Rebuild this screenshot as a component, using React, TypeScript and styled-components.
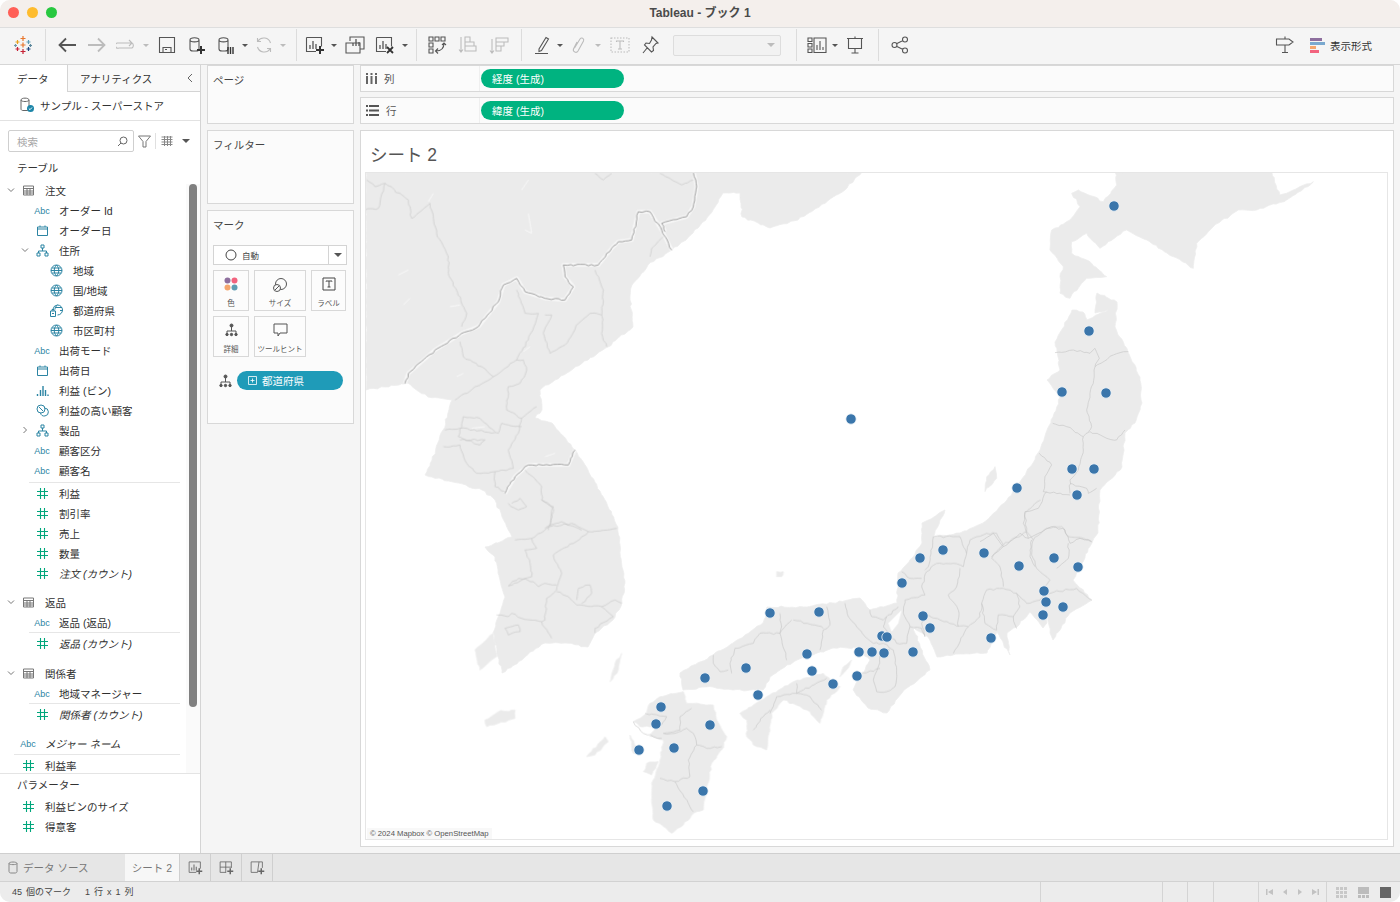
import React from "react";
import styled, { createGlobalStyle } from "styled-components";

const GlobalStyle = createGlobalStyle`
  html, body { margin: 0; padding: 0; background: #fff; }
  body { font-family: "Liberation Sans", "Noto Sans CJK JP", sans-serif; color: #333; }
  * { box-sizing: border-box; }
`;

// ---- Window frame ----
const Window = styled.div`
  width: 1400px;
  height: 902px;
  display: flex;
  flex-direction: column;
  overflow: hidden;
  border-radius: 10px;
  background: #f5f5f5;
`;

const TitleBar = styled.div`
  height: 28px;
  flex: none;
  position: relative;
  display: flex;
  align-items: center;
  justify-content: center;
  padding-bottom: 4px;
  background: #f4efec;
  border-bottom: 1px solid #dedede;
  font-size: 12px;
  font-weight: 700;
  color: #4a4a4a;
`;

const Lights = styled.div`
  position: absolute;
  left: 8px;
  top: 7px;
  display: flex;
  gap: 8px;
`;

const Light = styled.span<{ $c: string }>`
  width: 11px;
  height: 11px;
  border-radius: 50%;
  background: ${(p) => p.$c};
`;

// ---- Toolbar ----
const Toolbar = styled.div`
  height: 37px;
  flex: none;
  display: flex;
  align-items: center;
  padding-bottom: 2px;
  background: #f5f5f5;
  border-bottom: 1px solid #d6d6d6;
`;

const ToolGroup = styled.div`
  height: 32px;
  display: flex;
  align-items: center;
  padding: 0 7px 0 6px;
  border-left: 1px solid #dcdcdc;
`;

const LogoSlot = styled.div`
  width: 45px;
  display: flex;
  justify-content: center;
`;

const Tool = styled.div<{ $w: number; $off?: boolean }>`
  width: ${(p) => p.$w}px;
  flex: none;
  display: flex;
  justify-content: center;
  align-items: center;
  color: ${(p) => (p.$off ? "#bcbcbc" : "#555")};
`;

const Caret = styled.span<{ $off?: boolean; $size?: number }>`
  width: 0;
  height: 0;
  border-left: ${(p) => p.$size ?? 3}px solid transparent;
  border-right: ${(p) => p.$size ?? 3}px solid transparent;
  border-top: ${(p) => p.$size ?? 3}px solid ${(p) => (p.$off ? "#bcbcbc" : "#555")};
`;

const ToolSelect = styled.div`
  width: 108px;
  height: 21px;
  margin: 0 8px 0 11px;
  padding-right: 5px;
  display: flex;
  align-items: center;
  justify-content: flex-end;
  background: #f2f2f2;
  border: 1px solid #dddddd;
  border-radius: 2px;
`;

const ToolRight = styled.div`
  margin-left: auto;
  padding-right: 28px;
  display: flex;
  align-items: center;
  font-size: 10.5px;
  color: #333;
`;

const ShowMe = styled.div`
  display: flex;
  align-items: center;
  gap: 5px;
  margin-left: 14px;
`;

// ---- Work area ----
const Body = styled.div`
  flex: 1;
  min-height: 0;
  display: flex;
`;

const DataPane = styled.aside`
  width: 201px;
  flex: none;
  display: flex;
  flex-direction: column;
  position: relative;
  background: #fff;
  border-right: 1px solid #d4d4d4;
`;

const PaneTabs = styled.div`
  height: 27px;
  flex: none;
  display: flex;
  font-size: 10.5px;
`;

const PaneTab = styled.div<{ $active?: boolean; $w: number }>`
  width: ${(p) => p.$w}px;
  display: flex;
  align-items: center;
  padding-left: ${(p) => (p.$active ? 17 : 12)}px;
  position: relative;
  background: ${(p) => (p.$active ? "#fff" : "#f9f9f9")};
  ${(p) => (p.$active ? "" : "border-left: 1px solid #d4d4d4; border-bottom: 1px solid #d4d4d4;")}
`;

const CollapseMark = styled.span`
  position: absolute;
  right: 6px;
  top: 7px;
  color: #666;
  display: flex;
`;

const SourceRow = styled.div`
  height: 29px;
  flex: none;
  display: flex;
  align-items: center;
  gap: 5px;
  padding: 0 0 2px 19px;
  font-size: 10.5px;
  border-bottom: 1px solid #e2e2e2;
`;

const SearchRow = styled.div`
  display: flex;
  align-items: center;
  flex: none;
  height: 22px;
  margin: 9px 0 5px 8px;
`;

const SearchBox = styled.div`
  width: 126px;
  height: 22px;
  display: flex;
  align-items: center;
  justify-content: space-between;
  padding: 0 5px 0 8px;
  border: 1px solid #cfcfcf;
  border-radius: 2px;
  font-size: 10.5px;
  color: #a8a8a8;
  background: #fff;
`;

const SearchTools = styled.div`
  display: flex;
  align-items: center;
  color: #777;
  margin-left: 3px;
`;

const VRule = styled.span`
  width: 1px;
  height: 16px;
  margin: 0 5px 0 3px;
  background: #e0e0e0;
`;

const SectionHead = styled.div`
  height: 20px;
  flex: none;
  display: flex;
  align-items: center;
  padding-left: 17px;
  font-size: 10.5px;
  color: #333;
`;

const Tree = styled.div`
  flex: 1;
  min-height: 0;
  overflow: hidden;
  margin-top: 3px;
  border-bottom: 1px solid #e4e4e4;
`;

const ScrollTrack = styled.div`
  position: absolute;
  top: 119px;
  right: 0;
  bottom: 80px;
  width: 14px;
  background: #fafafa;
`;

const ScrollThumb = styled.div`
  position: absolute;
  top: 0;
  left: 3px;
  width: 8px;
  height: 523px;
  border-radius: 4px;
  background: #808080;
`;

const FieldRow = styled.div<{ $depth: number; $gap?: number }>`
  height: 20px;
  display: flex;
  align-items: center;
  padding-left: ${(p) => 4 + p.$depth * 14}px;
  margin-top: ${(p) => p.$gap ?? 0}px;
  font-size: 10.5px;
  white-space: nowrap;
  color: #2f2f2f;
`;

const Chevron = styled.span`
  width: 14px;
  flex: none;
  display: flex;
  justify-content: center;
  color: #777;
`;

const KindSlot = styled.span`
  width: 20px;
  flex: none;
  display: flex;
  justify-content: center;
  align-items: center;
  margin-right: 7px;
`;

const AbcMark = styled.span`
  padding-top: 2px;
  font-size: 9px;
  color: #2b84a3;
`;

const FieldName = styled.span<{ $italic?: boolean }>`
  font-style: ${(p) => (p.$italic ? "italic" : "normal")};
`;

const FieldRule = styled.div<{ $left: number; $gapTop?: number }>`
  height: 1px;
  width: ${(p) => 180 - p.$left}px;
  margin-left: ${(p) => p.$left}px;
  margin-top: ${(p) => p.$gapTop ?? 0}px;
  background: #e6e6e6;
`;

const ParamList = styled.div`
  height: 79px;
  flex: none;
`;

const ParamRow = styled.div`
  height: 20px;
  display: flex;
  align-items: center;
  padding-left: 18px;
  font-size: 10.5px;
  color: #2f2f2f;
`;

const ParamHead = styled(SectionHead)`
  margin-bottom: 2px;
`;

// ---- Cards column ----
const CardColumn = styled.div`
  width: 147px;
  flex: none;
  margin-left: 6px;
  display: flex;
  flex-direction: column;
  gap: 6px;
`;

const Card = styled.section<{ $h: number }>`
  height: ${(p) => p.$h}px;
  padding: 6px 6px 6px 5px;
  background: #fbfbfb;
  border: 1px solid #d8d8d8;
  font-size: 10.5px;
  color: #444;
`;

const MarkType = styled.div`
  height: 20px;
  margin: 13px 0 5px;
  display: flex;
  align-items: center;
  background: #fff;
  border: 1px solid #d4d4d4;
  font-size: 8.5px;
`;

const MarkTypeLabel = styled.div`
  flex: 1;
  height: 100%;
  display: flex;
  align-items: center;
  gap: 5px;
  padding-left: 11px;
  border-right: 1px solid #d4d4d4;
`;

const MarkTypeArrow = styled.div`
  width: 17px;
  display: flex;
  justify-content: center;
`;

const MarkGrid = styled.div`
  display: grid;
  grid-template-columns: 36px 52px 35px;
  grid-auto-rows: 41px;
  gap: 5px;
`;

const MarkButton = styled.div`
  display: flex;
  flex-direction: column;
  align-items: center;
  justify-content: space-between;
  padding: 6px 0 2px;
  background: #fcfcfc;
  border: 1px solid #d8d8d8;
  font-size: 7.5px;
  color: #555;
  white-space: nowrap;
`;

const MarkField = styled.div`
  display: flex;
  align-items: center;
  margin-top: 14px;
  color: #555;
`;

const MarkFieldIcon = styled.span`
  width: 24px;
  display: flex;
  justify-content: center;
`;

const FieldPill = styled.div`
  width: 106px;
  height: 19px;
  display: flex;
  align-items: center;
  gap: 5px;
  padding: 0 0 1px 11px;
  border-radius: 10px;
  background: #1f9bb8;
  color: #fff;
  font-size: 10.5px;
`;

// ---- Shelves and view ----
const ViewColumn = styled.div`
  flex: 1;
  min-width: 0;
  margin: 0 6px 6px 6px;
  display: flex;
  flex-direction: column;
`;

const Shelf = styled.div<{ $h: number; $mb: number }>`
  height: ${(p) => p.$h}px;
  margin-bottom: ${(p) => p.$mb}px;
  flex: none;
  display: flex;
  align-items: center;
  background: #fbfbfb;
  border: 1px solid #d8d8d8;
`;

const ShelfLabel = styled.div`
  width: 119px;
  flex: none;
  height: 100%;
  display: flex;
  align-items: center;
  gap: 7px;
  padding-left: 5px;
  font-size: 10.5px;
  color: #555;
  border-right: 1px solid #efefef;
`;

const MeasurePill = styled.div`
  width: 143px;
  height: 19px;
  margin-left: 1px;
  display: flex;
  align-items: center;
  padding: 0 0 1px 11px;
  border-radius: 10px;
  background: #00b380;
  color: #fff;
  font-size: 10.5px;
`;

const Sheet = styled.div`
  flex: 1;
  min-height: 0;
  display: flex;
  flex-direction: column;
  padding: 0 5px 6px 4px;
  background: #fff;
  border: 1px solid #d8d8d8;
`;

const SheetTitle = styled.h1`
  height: 41px;
  margin: 0;
  padding: 12px 0 0 5px;
  font-size: 17.5px;
  line-height: 24px;
  font-weight: 400;
  color: #555;
`;

const MapFrame = styled.div`
  flex: 1;
  min-height: 0;
  position: relative;
  border: 1px solid #e6e6e6;
  background: #fff;
  overflow: hidden;
`;

const MapSvg = styled.svg`
  display: block;
  width: 100%;
  height: 100%;
`;

const LandLayer = styled.g`
  filter: blur(0.6px);
`;

const Land = styled.polygon`
  fill: #ebebeb;
  stroke: #eeeeee;
  stroke-width: 0.8;
  vector-effect: non-scaling-stroke;
`;

const Water = styled.polygon`
  fill: #fff;
`;

const Region = styled.polyline`
  fill: none;
  stroke: #c0c0c0;
  stroke-width: 0.55;
  stroke-linejoin: round;
  vector-effect: non-scaling-stroke;
`;

const Frontier = styled.polyline`
  fill: none;
  stroke: #959595;
  stroke-width: 0.9;
  stroke-linejoin: round;
  vector-effect: non-scaling-stroke;
`;

const FrontierGlow = styled.polyline`
  fill: none;
  stroke: #f7f7f7;
  stroke-width: 4;
  stroke-linejoin: round;
  vector-effect: non-scaling-stroke;
`;

const Streak = styled.polyline`
  fill: none;
  stroke: #f8f8f8;
  stroke-width: 1;
  vector-effect: non-scaling-stroke;
`;

const Mark = styled.circle`
  fill: #3b76ab;
  stroke: #f4f7fa;
  stroke-width: 0.8;
`;

const Attribution = styled.div`
  position: absolute;
  left: 1px;
  bottom: 0;
  padding: 1px 3px;
  font-size: 7.7px;
  color: #555;
  background: rgba(245, 245, 245, 0.7);
`;

// ---- Bottom bars ----
const TabBar = styled.div`
  height: 29px;
  flex: none;
  display: flex;
  align-items: stretch;
  background: #e6e6e6;
  border-top: 1px solid #cfcfcf;
  border-bottom: 1px solid #d2d2d2;
  font-size: 10.5px;
  color: #777;
`;

const SourceTab = styled.div`
  width: 125px;
  display: flex;
  align-items: center;
  gap: 5px;
  padding-left: 8px;
`;

const SheetTab = styled.div`
  width: 55px;
  display: flex;
  align-items: center;
  justify-content: center;
  background: #f7f7f7;
  border-right: 1px solid #cfcfcf;
`;

const NewTab = styled.div`
  width: 31px;
  display: flex;
  align-items: center;
  justify-content: center;
  color: #666;
  border-right: 1px solid #cfcfcf;
`;

const StatusBar = styled.div`
  height: 20px;
  flex: none;
  display: flex;
  align-items: stretch;
  background: #ececec;
  font-size: 9px;
  word-spacing: 1.5px;
  color: #444;
`;

const StatusText = styled.div<{ $w: number; $pad: number }>`
  width: ${(p) => p.$w}px;
  padding: 0 0 2px ${(p) => p.$pad}px;
  display: flex;
  align-items: center;
  white-space: nowrap;
`;

const StatusCell = styled.div<{ $w: number }>`
  width: ${(p) => p.$w}px;
  border-left: 1px solid #d4d4d4;
`;

const StatusTools = styled.div<{ $w: number }>`
  width: ${(p) => p.$w}px;
  display: flex;
  align-items: center;
  justify-content: space-around;
  border-left: 1px solid #d4d4d4;
  padding: 0 3px;
`;

// ---- Icons ----
type GlyphProps = { size?: number; vb?: number; children: React.ReactNode };

const Glyph = ({ size = 20, vb = 20, children }: GlyphProps) => (
  <svg width={size} height={size} viewBox={`0 0 ${vb} ${vb}`} fill="none" stroke="currentColor" strokeWidth={1.1}>
    {children}
  </svg>
);

const Cylinder = () => (
  <path d="M4 5c0-3 9-3 9 0v9c0 1.500-2 2-3 2H7c-1.500 0-3-.5-3-2zM4 5c0 2.500 9 2.500 9 0" />
);

const Bars = ({ x = 0, y = 0 }: { x?: number; y?: number }) => (
  <path transform={`translate(${x} ${y})`} d="M6 13V9M9 13V5M12 13V8" strokeWidth={1.3} />
);

const Plus = () => <path d="M15 11v8M11 15h8" stroke="#333" strokeWidth={2} />;

const icons: Record<string, React.ReactNode> = {
  back: <path d="M19 10H2.500M9 3.500 2.500 10 9 16.500" strokeWidth={1.8} />,
  forward: <path d="M1 10h16.500M11 3.500l6.500 6.500-6.500 6.500" strokeWidth={1.8} />,
  redo: <path d="M1 8h15v0a3 3 0 0 1 0 5H3a2.500 2.500 0 0 1-2-5M13 5l3 3-3 3" />,
  save: <path d="M2.500 2.500h15v15h-15zM6 17.500v-5h8v5M8 14.500h2" />,
  addData: (
    <>
      <Cylinder />
      <Plus />
    </>
  ),
  pauseData: (
    <>
      <Cylinder />
      <path d="M13 12v7M15.500 12v7M18 12v7" stroke="#333" strokeWidth={1.4} />
    </>
  ),
  refresh: <path d="M16.500 8a7 7 0 0 0-12.500-2M3.500 12a7 7 0 0 0 12.500 2M3.500 3v3.500H7M16.500 17v-3.500H13" />,
  newSheet: (
    <>
      <path d="M1.500 2.500h15v9M11 16.500H1.500v-14" />
      <Bars x={-1} y={1} />
      <Plus />
    </>
  ),
  dupSheet: (
    <>
      <path d="M5 6V2h14v12h-4M1 8h14v10H1z" />
      <path d="M8 11V8M11 11V4M14 11V7" strokeWidth={1.3} />
    </>
  ),
  clearSheet: (
    <>
      <path d="M1.500 2.500h15v9M11 16.500H1.500v-14" />
      <Bars x={-1} y={1} />
      <path d="m12 12 6 6M18 12l-6 6" stroke="#333" strokeWidth={1.8} />
    </>
  ),
  swap: (
    <path d="M2 2h4v4H2zM8 2h4v4H8zM14 2h4v4h-4zM2 8h4v4H2zM2 14h4v4H2zM17 8c0 5-3 8-8 8M11 13.500 8.500 16l2.500 2.500M15 10l2-2 2 2" />
  ),
  sortAsc: <path d="M4 2v15M2 14.500 4 17l2-2.500M8 2h5v5H8zM8 7h9v4H8zM8 11h11v5H8z" />,
  sortDesc: <path d="M3 4v14M1 15.500 3 18l2-2.500M7 3h12v4H7zM7 7h8v4H7zM7 11h5v5H7z" />,
  pen: <path d="M7 14 14 2.500l2.500 1.500-7 11.500-2.500 1zM3 18.500h13" />,
  clip: <path d="m8 7-3.500 7c-1 3 3 4.500 4.500 2l5.500-10c1-2.500-2-4-3.500-2L5.500 13" />,
  textBox: (
    <>
      <path d="M1 3h18v14H1z" strokeDasharray="1.500 1.500" />
      <path d="M6.500 7V6h7v1M10 6v8M8 14h4" />
    </>
  ),
  pin: <path d="m12 2 6 6-2 .5-3 3.500.5 3.500-2 1.500-7-7 1.500-2 3.500.5L11.500 5zM7.500 12.500 3 18" />,
  showSheet: (
    <>
      <path d="M1 3h4v3.500H1zM1 8.500h4V12H1zM1 14h4v3.500H1zM7 3h12v14.500H7z" />
      <path d="M10 15v-5M13 15V6M16 15v-3" />
    </>
  ),
  present: <path d="M2 3.500h16M3.500 3.500v10h13v-10M10 13.500v4M6.500 18h7M10 1.500v2" />,
  share: (
    <path d="M7 10a2.500 2.500 0 1 1-5 0 2.500 2.500 0 0 1 5 0zM17.500 4.500a2.500 2.500 0 1 1-5 0 2.500 2.500 0 0 1 5 0zM17.500 15.500a2.500 2.500 0 1 1-5 0 2.500 2.500 0 0 1 5 0zM6.500 8.800l6.500-3.200M6.500 11.200l6.500 3.200" />
  ),
  signpost: <path d="M1.500 4h12.500l4 3-4 3H1.500zM10 1.500V4M10 10v7M7 17.500h6" />,
};

const ToolIcon = ({ name }: { name: string }) => <Glyph>{icons[name]}</Glyph>;

const TableauLogo = () => (
  <svg width="20" height="20" viewBox="0 0 20 20" fill="none" strokeWidth={1.2}>
    <path d="M10 1v5M7.500 3.500h5" stroke="#e8762c" />
    <path d="M4.500 5v4M2.500 7h4" stroke="#eaa21b" />
    <path d="M15.500 5v4M13.500 7h4" stroke="#5b9bb5" />
    <path d="M1 10.500h3M2.500 9v3" stroke="#7099a6" />
    <path d="M19 10.500h-3M17.500 9v3" stroke="#5b879b" />
    <path d="M10 7.500v5M7.500 10h5" stroke="#e8762c" />
    <path d="M4.500 12v4M2.500 14h4" stroke="#c72035" />
    <path d="M15.500 12v4M13.500 14h4" stroke="#1f457e" />
    <path d="M10 14v5M7.500 16.500h5" stroke="#c72035" />
  </svg>
);

const ShowMeIcon = () => (
  <svg width="16" height="16" viewBox="0 0 16 16">
    <rect x="1" y="1" width="12" height="3" fill="#8e6f9e" />
    <rect x="1" y="5" width="15" height="3" fill="#7aa9cf" />
    <rect x="1" y="9" width="6" height="3" fill="#f5a66d" />
    <rect x="1" y="13" width="9" height="3" fill="#f2637e" />
  </svg>
);

const SourceIcon = () => (
  <svg width="16" height="16" viewBox="0 0 16 16" fill="none" stroke="#666">
    <path d="M2 3c0-2.500 8-2.500 8 0v9c0 1-1 1.500-2 1.500H4c-1 0-2-.5-2-1.500zM2 3c0 2 8 2 8 0" />
    <circle cx="11.500" cy="11.500" r="3.500" fill="#1c85a8" stroke="none" />
    <path d="m9.800 11.500 1.200 1.200 2-2.200" stroke="#fff" />
  </svg>
);

const TypeIcon = ({ kind }: { kind: string }) => {
  const blue = "#2b84a3";
  const green = "#00a67c";
  const svg = (stroke: string, body: React.ReactNode) => (
    <svg width="13" height="13" viewBox="0 0 13 13" fill="none" stroke={stroke}>
      {body}
    </svg>
  );
  switch (kind) {
    case "abc":
      return <AbcMark>Abc</AbcMark>;
    case "date":
      return svg(blue, <path d="M1.500 3h10v8.500h-10zM1.500 5h10M4 1.500V3M9 1.500V3" />);
    case "hier":
      return svg(blue, <path d="M5 1h3v3H5zM1 9h3v3H1zM9 9h3v3H9zM6.500 4v3M2.500 9V7h8v2" />);
    case "globe":
      return svg(blue, <path d="M6.500 1a5.500 5.500 0 1 0 0 11 5.500 5.500 0 0 0 0-11zM1 6.500h11M2 4h9M2 9h9M6.500 1c-3 3-3 8 0 11M6.500 1c3 3 3 8 0 11" />);
    case "geo":
      return svg(blue, <path d="M7.500 1a5 5 0 0 1 0 10M3 5a5 5 0 0 1 4.500-4M5 5.500c0-2 1-3.500 2.500-4.500M10 6.500h2.500M6 3.500h6M.5 7h5v5.500h-5zM2 7V5.500h2V7M2 9.500h2" />);
    case "bin":
      return svg(blue, <path d="M1.500 12v-2M4.500 12V6M7 12V2M9.500 12V6M12 12v-1.500" strokeWidth={1.4} />);
    case "set":
      return svg(blue, <path d="M5 1a4 4 0 1 0 0 8 4 4 0 0 0 0-8zM8.500 4a4 4 0 1 1-4 5M3 3l4 4" />);
    case "table":
      return svg("#777", <path d="M1.500 2h10v9h-10zM1.500 4.500h10M1.500 7h10M1.500 9h10M5 4.500V11M8 4.500V11" />);
    default:
      return svg(green, <path d="M4.500 1v11M8.500 1v11M1 4.500h11M1 8.500h11" strokeWidth={1.1} />);
  }
};

const Chev = ({ open }: { open: boolean }) => (
  <svg width="8" height="8" viewBox="0 0 8 8" fill="none" stroke="currentColor">
    <path d={open ? "M1 2.500 4 5.500l3-3" : "M2.500 1l3 3-3 3"} />
  </svg>
);

const DetailIcon = () => (
  <svg width="13" height="14" viewBox="0 0 13 14" fill="none" stroke="#555">
    <circle cx="6.500" cy="2.500" r="1.500" fill="#555" />
    <path d="M6.500 4v4M2 10V8h9v2" />
    <circle cx="2" cy="11.500" r="1.200" fill="#555" />
    <circle cx="6.500" cy="11.500" r="1.200" fill="#555" />
    <circle cx="11" cy="11.500" r="1.200" fill="#555" />
  </svg>
);

const NavIcon = ({ d }: { d: string }) => (
  <svg width="8" height="8" viewBox="0 0 8 8" fill="#c2c2c2">
    <path d={d} />
  </svg>
);

// ---- Data ----
type Field = {
  label: string;
  kind: string;
  depth: number;
  chevron?: "open" | "closed";
  italic?: boolean;
  gap?: number;
  ruleAfter?: { left: number; gapTop?: number };
};

const fields: Field[] = [
  { label: "注文", kind: "table", depth: 0, chevron: "open" },
  { label: "オーダー Id", kind: "abc", depth: 1 },
  { label: "オーダー日", kind: "date", depth: 1 },
  { label: "住所", kind: "hier", depth: 1, chevron: "open" },
  { label: "地域", kind: "globe", depth: 2 },
  { label: "国/地域", kind: "globe", depth: 2 },
  { label: "都道府県", kind: "geo", depth: 2 },
  { label: "市区町村", kind: "globe", depth: 2 },
  { label: "出荷モード", kind: "abc", depth: 1 },
  { label: "出荷日", kind: "date", depth: 1 },
  { label: "利益 (ビン)", kind: "bin", depth: 1 },
  { label: "利益の高い顧客", kind: "set", depth: 1 },
  { label: "製品", kind: "hier", depth: 1, chevron: "closed" },
  { label: "顧客区分", kind: "abc", depth: 1 },
  { label: "顧客名", kind: "abc", depth: 1, ruleAfter: { left: 29, gapTop: 2 } },
  { label: "利益", kind: "num", depth: 1 },
  { label: "割引率", kind: "num", depth: 1 },
  { label: "売上", kind: "num", depth: 1 },
  { label: "数量", kind: "num", depth: 1 },
  { label: "注文 (カウント)", kind: "num", depth: 1, italic: true },
  { label: "返品", kind: "table", depth: 0, chevron: "open", gap: 9 },
  { label: "返品 (返品)", kind: "abc", depth: 1, ruleAfter: { left: 29 } },
  { label: "返品 (カウント)", kind: "num", depth: 1, italic: true },
  { label: "関係者", kind: "table", depth: 0, chevron: "open", gap: 10 },
  { label: "地域マネージャー", kind: "abc", depth: 1, ruleAfter: { left: 29 } },
  { label: "関係者 (カウント)", kind: "num", depth: 1, italic: true },
  { label: "メジャー ネーム", kind: "abc", depth: 0, italic: true, gap: 9, ruleAfter: { left: 14, gapTop: 1 } },
  { label: "利益率", kind: "num", depth: 0 },
];

const marks: [number, number][] = [
  [1114, 206], [1089, 331], [1062, 392], [1106, 393], [1072, 469], [1094, 469], [1017, 488], [1077, 495],
  [920, 558], [943, 550], [984, 553], [1019, 566], [1054, 558], [1078, 567], [902, 583], [1044, 591],
  [1046, 602], [1063, 607], [1043, 615], [923, 616], [930, 628], [991, 638], [882, 636], [887, 637],
  [859, 652], [872, 652], [884, 653], [913, 652], [807, 654], [812, 671], [833, 684], [857, 676],
  [770, 613], [819, 612], [746, 668], [705, 678], [758, 695], [661, 707], [656, 724], [710, 725],
  [639, 750], [674, 748], [703, 791], [667, 806], [851, 419],
];

// breaks a straight traced segment into small uneven steps, k = units per page pixel
const noise = (a: number, b: number) => {
  const v = Math.sin(a * 12.9898 + b * 78.233) * 43758.5453;
  return (v - Math.floor(v)) * 2 - 1;
};

const rough = (points: string, k = 1, closed = false) => {
  const pts = points.split(" ").map((s) => s.split(",").map(Number));
  if (closed) pts.push(pts[0]);
  const out: string[] = [];
  pts.slice(0, -1).forEach(([x1, y1], i) => {
    const [x2, y2] = pts[i + 1];
    const len = Math.hypot(x2 - x1, y2 - y1);
    const n = Math.max(1, Math.round(len / (3.5 * k)));
    for (let j = 0; j < n; j++) {
      const t = j / n;
      const amp = j === 0 ? 0 : 0.9 * k;
      const x = x1 + (x2 - x1) * t + noise(x1 + j, y1) * amp;
      const y = y1 + (y2 - y1) * t + noise(y1 + j, x1 + 7) * amp;
      out.push(`${x.toFixed(1)},${y.toFixed(1)}`);
    }
  });
  const last = pts[pts.length - 1];
  out.push(`${last[0]},${last[1]}`);
  return out.join(" ");
};

// land shapes, in page coordinates
const mainland =
  "366,172 862,172 845,190 798,220 770,228 742,217 740,193 723,193 712,212 693,233 672,250 648,265 632,285 630,297 633,327 608,347 588,360 555,380 540,390 542,410 535,418 552,423 575,450 588,470 605,500 618,527 622,567 625,583 622,603 613,620 595,633 588,647 565,643 545,643 525,657 502,673 498,657 493,633 505,597 498,573 495,557 485,547 512,537 502,517 495,500 482,490 425,475 432,460 443,430 452,400 428,397 408,383 385,387 366,390";
const honshu =
  "1097,293 1117,302 1115,327 1128,352 1140,377 1142,403 1135,423 1125,433 1122,467 1100,490 1098,533 1092,543 1078,570 1073,580 1092,600 1070,613 1053,640 1050,633 1048,617 1042,607 1047,623 1043,628 1030,612 1017,627 1007,633 1010,655 997,632 987,653 953,655 937,657 928,637 913,627 930,670 902,693 887,713 868,708 853,690 860,677 870,660 858,648 833,648 813,655 797,660 770,677 763,690 733,690 713,687 683,690 680,673 713,655 733,643 763,623 767,607 807,607 833,603 860,598 870,610 897,603 898,573 913,557 922,543 922,523 945,510 940,520 933,537 960,533 983,523 1007,500 1017,487 1038,453 1053,417 1060,397 1047,380 1060,370 1055,342 1072,310 1083,312 1087,320 1108,310 1095,313";

// shapes and lines traced per map crop
const frames = {
  nw: "translate(365 170) scale(.3333)",
  sw: "translate(365 500) scale(.3333)",
  mid: "translate(620 500) scale(.3333)",
  ne: "translate(980 170) scale(.3333)",
};

const midLand = [
  "360,640 440,590 520,545 610,520 660,560 620,600 600,670 560,630 490,600 455,640 440,750 400,735 380,710 380,660",
  "120,590 190,575 200,610 280,615 290,660 320,710 305,750 275,790 250,930 215,945 190,975 155,1000 125,975 100,960 95,850 115,800 130,720 90,710 110,680 60,680 40,665 80,640 90,610",
  "30,705 60,760 40,760",
  "80,790 115,785 95,825 70,815",
  "695,480 680,510 660,530 670,500",
  "470,215 490,215 485,230 470,230",
];

const neLand = [
  "405,5 875,5 900,75 940,60 1000,35 920,90 830,120 775,120 700,170 650,220 640,295 580,260 500,210 440,180 360,235 320,190 275,215 275,250 335,280 380,320 320,325 270,385 240,370 240,320 250,290 210,240 215,180 270,150 300,110 275,70 295,60 370,95 410,45",
  "45,890 50,925 15,965 20,920",
];

const swLand = [
  "360,660 400,635 450,630 450,655 400,670 365,680",
  "770,460 760,510 735,545 750,490",
  "665,770 720,710 730,725 690,765",
  "330,450 385,400 395,470 345,510",
];

const nwRegions = [
  "0,120 40,115 60,40 130,90 140,145 195,100 215,190 250,260 250,310 305,430 290,470",
  "5,30 30,50 60,40",
  "285,515 295,560 350,590 385,620 270,690",
  "385,620 455,570 475,570 485,600 465,640 430,650 425,720 470,745 515,710",
  "470,745 460,790 430,840 445,895",
  "455,360 480,430 520,430 490,510 455,570",
  "540,435 560,435 535,490 555,550 600,525 640,460 675,430 710,435",
  "690,300 715,360 710,490 725,530",
  "240,780 285,775 400,790 410,760 470,770",
  "295,740 345,745 390,785",
  "295,740 280,800 345,825 360,810 285,810",
  "235,830 285,825 305,880 335,910 390,905 445,895",
  "390,905 390,950 420,965",
  "430,1000 460,1020 485,1010 465,985 440,1000",
  "480,900 530,950 530,990 565,1010 550,1080",
  "540,1075 590,1055 650,1080",
  "690,10 715,30 740,10",
  "885,10 950,45 985,30",
  "855,260 860,235 895,200",
];

const nwFrontiers = [
  "120,640 130,610 210,540 290,490 340,470 400,395 415,345 455,325 480,365 540,385 600,390 625,350 600,320 595,285 700,285 740,235 760,215 800,210 820,125 855,125 890,180 920,240",
  "985,0 995,50 985,110 965,140 890,160 900,185",
  "630,840 610,885 490,885 450,920 420,970",
];

const swRegions = [
  "530,0 565,25 555,80 620,70 670,95 755,85",
  "555,80 500,115 450,120",
  "500,115 515,145 480,150 495,190 500,230 430,258",
  "430,258 460,235 505,245 520,260 540,250 575,255",
  "670,95 625,130 565,165 590,220 575,270 545,295 540,360 530,365 560,415",
  "575,275 610,290 635,315 710,320 750,300 770,310",
  "710,320 745,350 690,385 690,400",
  "395,345 430,350 440,340 470,355 530,365",
  "420,385 460,375 465,395 430,405 420,385",
  "635,300 640,265 675,255 680,280 650,310",
];

const midRegions = [
  "1262,0 1215,40 1220,95 1240,120 1280,85 1325,80 1345,110 1390,115 1415,125",
  "1240,120 1235,165 1250,205 1290,240 1275,260",
  "1220,95 1150,135 1115,175 1140,200 1150,260",
  "1150,135 1130,100 1100,100 1050,120 1040,160 1020,110 940,110 925,200 915,210",
  "1040,160 1030,200 1000,190 950,190 920,215 905,260 915,285 855,300",
  "1020,205 1010,260 985,285 1015,330 1015,380",
  "1150,265 1100,270 1085,310 1095,370 1130,390 1135,345 1180,350 1200,320 1190,280 1220,310 1260,300 1280,280 1370,265 1415,300",
  "1150,265 1190,280",
  "1085,310 1080,350 1045,380 1010,378 960,360 925,345 905,370 915,410",
  "1045,380 1000,460",
  "1180,350 1190,385",
  "845,215 870,235 905,235",
  "855,300 850,340 870,380 860,430 830,430 790,380 800,350",
  "675,310 685,350 710,380 735,410 760,430 790,430 820,450 830,510 825,560 800,575 770,575 760,540 775,500 780,465 810,450",
  "750,330 755,350 790,360 835,320",
  "870,380 905,385 915,410",
  "620,320 630,375 610,390 600,450",
  "520,360 585,375 610,385",
  "515,360 480,400 420,400 400,430 345,445 330,490 335,520",
  "480,340 485,380 480,400 500,480",
  "280,465 280,490 300,515 325,510",
  "700,530 780,505",
  "530,550 530,580 570,590 605,630",
  "450,640 470,590 530,580 620,535",
  "400,690 430,650 450,630",
  "75,640 140,650 125,675 100,660",
  "40,665 70,700 100,710 125,715",
  "215,625 180,650 180,690 130,700 165,700 200,685 220,700 230,735 205,780 210,830 165,845 120,835",
  "230,735 260,745 305,740",
  "165,845 205,910 220,935",
];

const neRegions = [
  "225,548 280,540 330,550 345,535 358,565 345,590 400,555 445,545",
  "345,590 340,640 330,670 320,720 335,770 325,785",
  "218,760 260,770 310,800 330,785 380,805 410,810 435,780",
  "310,800 310,840 295,900 270,930 270,970",
  "178,850 215,885 195,920 190,965 270,975",
  "270,940 320,955 325,970 350,955",
  "200,965 175,1015 135,1025 130,1060 145,1105",
  "145,1105 215,1070 255,1080 270,1120 300,1105 335,1115",
  "155,1110 150,1160 165,1190",
  "265,1120 265,1165 230,1195",
  "0,1115 40,1090 70,1130 120,1090 145,1105",
  "35,1160 70,1130",
];

const nwStreaks = [
  "190,95 205,70", "100,315 130,300", "115,405 135,385", "480,180 500,190 490,130", "470,60 490,30",
  "255,410 285,405", "475,545 495,530", "320,775 360,770", "540,860 570,850", "275,620 295,610",
];

const JapanMap = () => (
  <MapSvg viewBox="366 173 1021 666" aria-hidden="true">
    <LandLayer>
      <Land points={rough(mainland, 1, true)} />
      <Land points={rough(honshu, 1, true)} />
      <g transform={frames.mid}>
        {midLand.map((p) => <Land key={p} points={rough(p, 3, true)} />)}
        <Water points="805,370 845,330 835,370 815,395" />
      </g>
      <g transform={frames.ne}>
        {neLand.map((p) => <Land key={p} points={rough(p, 3, true)} />)}
      </g>
      <g transform={frames.sw}>
        {swLand.map((p) => <Land key={p} points={rough(p, 3, true)} />)}
      </g>
    </LandLayer>
    <g transform={frames.nw}>
      {nwStreaks.map((p) => <Streak key={p} points={p} />)}
      {nwFrontiers.map((p) => <FrontierGlow key={p} points={p} />)}
      {nwRegions.map((p) => <Region key={p} points={rough(p, 3)} />)}
      {nwFrontiers.map((p) => <Frontier key={p} points={rough(p, 3)} />)}
    </g>
    <g transform={frames.sw}>
      {swRegions.map((p) => <Region key={p} points={rough(p, 3)} />)}
    </g>
    <g transform={frames.mid}>
      {midRegions.map((p) => <Region key={p} points={rough(p, 3)} />)}
    </g>
    <g transform={frames.ne}>
      {neRegions.map((p) => <Region key={p} points={rough(p, 3)} />)}
    </g>
    {marks.map(([x, y]) => <Mark key={`${x}-${y}`} cx={x} cy={y} r={5.2} />)}
  </MapSvg>
);

const App: React.FC = () => {
  return (
    <Window>
      <GlobalStyle />
      <TitleBar>
        <Lights>
          <Light $c="#ff5f57" />
          <Light $c="#febc2e" />
          <Light $c="#28c840" />
        </Lights>
        Tableau - ブック 1
      </TitleBar>

      <Toolbar>
        <LogoSlot><TableauLogo /></LogoSlot>
        <ToolGroup>
          <Tool $w={30}><ToolIcon name="back" /></Tool>
          <Tool $w={30} $off><ToolIcon name="forward" /></Tool>
          <Tool $w={28} $off><ToolIcon name="redo" /></Tool>
          <Tool $w={12}><Caret $off /></Tool>
          <Tool $w={29}><ToolIcon name="save" /></Tool>
          <Tool $w={30}><ToolIcon name="addData" /></Tool>
          <Tool $w={28}><ToolIcon name="pauseData" /></Tool>
          <Tool $w={12}><Caret /></Tool>
          <Tool $w={26} $off><ToolIcon name="refresh" /></Tool>
          <Tool $w={12}><Caret $off /></Tool>
        </ToolGroup>
        <ToolGroup>
          <Tool $w={24}><ToolIcon name="newSheet" /></Tool>
          <Tool $w={14}><Caret /></Tool>
          <Tool $w={28}><ToolIcon name="dupSheet" /></Tool>
          <Tool $w={32}><ToolIcon name="clearSheet" /></Tool>
          <Tool $w={8}><Caret /></Tool>
        </ToolGroup>
        <ToolGroup>
          <Tool $w={28}><ToolIcon name="swap" /></Tool>
          <Tool $w={32} $off><ToolIcon name="sortAsc" /></Tool>
          <Tool $w={31} $off><ToolIcon name="sortDesc" /></Tool>
        </ToolGroup>
        <ToolGroup>
          <Tool $w={28}><ToolIcon name="pen" /></Tool>
          <Tool $w={8}><Caret /></Tool>
          <Tool $w={30} $off><ToolIcon name="clip" /></Tool>
          <Tool $w={8}><Caret $off /></Tool>
          <Tool $w={36} $off><ToolIcon name="textBox" /></Tool>
          <Tool $w={24}><ToolIcon name="pin" /></Tool>
          <ToolSelect><Caret $off $size={4} /></ToolSelect>
        </ToolGroup>
        <ToolGroup>
          <Tool $w={28}><ToolIcon name="showSheet" /></Tool>
          <Tool $w={8}><Caret /></Tool>
          <Tool $w={32}><ToolIcon name="present" /></Tool>
        </ToolGroup>
        <ToolGroup>
          <Tool $w={30}><ToolIcon name="share" /></Tool>
        </ToolGroup>
        <ToolRight>
          <Tool $w={20}><ToolIcon name="signpost" /></Tool>
          <ShowMe>
            <ShowMeIcon />
            表示形式
          </ShowMe>
        </ToolRight>
      </Toolbar>

      <Body>
        <DataPane>
          <PaneTabs>
            <PaneTab $active $w={67}>データ</PaneTab>
            <PaneTab $w={133}>
              アナリティクス
              <CollapseMark>
                <svg width="8" height="12" viewBox="0 0 8 12" fill="none" stroke="currentColor">
                  <path d="M6 2 2 6l4 4" />
                </svg>
              </CollapseMark>
            </PaneTab>
          </PaneTabs>
          <SourceRow>
            <SourceIcon />
            サンプル - スーパーストア
          </SourceRow>
          <SearchRow>
            <SearchBox>
              検索
              <svg width="11" height="11" viewBox="0 0 11 11" fill="none" stroke="#666">
                <circle cx="6.500" cy="4.500" r="3.500" />
                <path d="M4 7 1 10" />
              </svg>
            </SearchBox>
            <SearchTools>
              <svg width="15" height="15" viewBox="0 0 15 15" fill="none" stroke="currentColor">
                <path d="M1.500 2h12L9 7.500V13H6V7.500z" />
              </svg>
              <VRule />
              <svg width="12" height="10" viewBox="0 0 12 10" fill="none" stroke="#888">
                <path d="M.5 1h11M.5 3.500h11M.5 6h11M.5 8.500h11M3.500 0v10M6.500 0v10M9.500 0v10" />
              </svg>
              <Tool $w={25}><Caret $size={4} /></Tool>
            </SearchTools>
          </SearchRow>
          <SectionHead>テーブル</SectionHead>
          <Tree>
            {fields.map((f) => (
              <React.Fragment key={f.label}>
                <FieldRow $depth={f.depth} $gap={f.gap}>
                  <Chevron>{f.chevron ? <Chev open={f.chevron === "open"} /> : null}</Chevron>
                  <KindSlot><TypeIcon kind={f.kind} /></KindSlot>
                  <FieldName $italic={f.italic}>{f.label}</FieldName>
                </FieldRow>
                {f.ruleAfter ? <FieldRule $left={f.ruleAfter.left} $gapTop={f.ruleAfter.gapTop} /> : null}
              </React.Fragment>
            ))}
          </Tree>
          <ScrollTrack><ScrollThumb /></ScrollTrack>
          <ParamList>
            <ParamHead>パラメーター</ParamHead>
            <ParamRow>
              <KindSlot><TypeIcon kind="num" /></KindSlot>
              利益ビンのサイズ
            </ParamRow>
            <ParamRow>
              <KindSlot><TypeIcon kind="num" /></KindSlot>
              得意客
            </ParamRow>
          </ParamList>
        </DataPane>

        <CardColumn>
          <Card $h={59}>ページ</Card>
          <Card $h={74}>フィルター</Card>
          <Card $h={214}>
            マーク
            <MarkType>
              <MarkTypeLabel>
                <svg width="12" height="12" viewBox="0 0 12 12" fill="none" stroke="#444">
                  <circle cx="6" cy="6" r="5" />
                </svg>
                自動
              </MarkTypeLabel>
              <MarkTypeArrow><Caret $size={4} /></MarkTypeArrow>
            </MarkType>
            <MarkGrid>
              <MarkButton>
                <svg width="14" height="14" viewBox="0 0 14 14">
                  <circle cx="3.500" cy="3.500" r="3" fill="#8e6f9e" />
                  <circle cx="10.500" cy="3.500" r="3" fill="#f2637e" />
                  <circle cx="3.500" cy="10.500" r="3" fill="#f5a66d" />
                  <circle cx="10.500" cy="10.500" r="3" fill="#5f9db3" />
                </svg>
                色
              </MarkButton>
              <MarkButton>
                <svg width="16" height="16" viewBox="0 0 16 16" fill="none" stroke="#555">
                  <circle cx="9" cy="7" r="5.500" />
                  <circle cx="5" cy="11" r="3.500" fill="#fcfcfc" />
                  <path d="m3 13 4-4" />
                </svg>
                サイズ
              </MarkButton>
              <MarkButton>
                <svg width="14" height="14" viewBox="0 0 14 14" fill="none" stroke="#444">
                  <path d="M1 1h12v12H1zM4 4.500V4h6v.5M7 4v6M5.500 10h3" />
                </svg>
                ラベル
              </MarkButton>
              <MarkButton>
                <DetailIcon />
                詳細
              </MarkButton>
              <MarkButton>
                <svg width="15" height="14" viewBox="0 0 15 14" fill="none" stroke="#555">
                  <path d="M1 1h13v9H7l-2 3v-3H1z" />
                </svg>
                ツールヒント
              </MarkButton>
            </MarkGrid>
            <MarkField>
              <MarkFieldIcon><DetailIcon /></MarkFieldIcon>
              <FieldPill>
                <svg width="9" height="9" viewBox="0 0 9 9" fill="none" stroke="#fff" strokeWidth={0.8}>
                  <path d="M.5.500h8v8h-8zM4.500 2.500v4M2.500 4.500h4" />
                </svg>
                都道府県
              </FieldPill>
            </MarkField>
          </Card>
        </CardColumn>

        <ViewColumn>
          <Shelf $h={27} $mb={5}>
            <ShelfLabel>
              <svg width="11" height="11" viewBox="0 0 11 11" fill="#666">
                <path d="M0 0h2v2H0zM0 3h2v8H0zM4.500 0h2v2h-2zM4.500 3h2v8h-2zM9 0h2v2H9zM9 3h2v8H9z" />
              </svg>
              列
            </ShelfLabel>
            <MeasurePill>経度 (生成)</MeasurePill>
          </Shelf>
          <Shelf $h={27} $mb={6}>
            <ShelfLabel>
              <svg width="13" height="11" viewBox="0 0 13 11" fill="#555">
                <path d="M0 0h2v2H0zM3 0h10v2H3zM0 4.500h2v2H0zM3 4.500h10v2H3zM0 9h2v2H0zM3 9h10v2H3z" />
              </svg>
              行
            </ShelfLabel>
            <MeasurePill>緯度 (生成)</MeasurePill>
          </Shelf>
          <Sheet>
            <SheetTitle>シート 2</SheetTitle>
            <MapFrame>
              <JapanMap />
              <Attribution>© 2024 Mapbox © OpenStreetMap</Attribution>
            </MapFrame>
          </Sheet>
        </ViewColumn>
      </Body>

      <TabBar>
        <SourceTab>
          <svg width="10" height="13" viewBox="0 0 10 13" fill="none" stroke="#888">
            <path d="M1 2.500c0-2 8-2 8 0v8c0 1-1 1.500-2 1.500H3c-1 0-2-.5-2-1.500zM1 2.500c0 1.500 8 1.500 8 0" />
          </svg>
          データ ソース
        </SourceTab>
        <SheetTab>シート 2</SheetTab>
        <NewTab>
          <Glyph size={15}>
            <path d="M1.500 2.500h15v9M11 16.500H1.500v-14" />
            <Bars x={-1} y={1} />
            <path d="M15 11v8M11 15h8" strokeWidth={2} />
          </Glyph>
        </NewTab>
        <NewTab>
          <Glyph size={15}>
            <path d="M1.500 2.500h15v8M1.500 2.500v14h8M9 2.500v14M1.500 9.500h15" />
            <path d="M15 11v8M11 15h8" strokeWidth={2} />
          </Glyph>
        </NewTab>
        <NewTab>
          <Glyph size={15}>
            <path d="M1.500 2.500H12l-2 14H1.500zM12 2.500h4.500v8" />
            <path d="M15 11v8M11 15h8" strokeWidth={2} />
          </Glyph>
        </NewTab>
      </TabBar>

      <StatusBar>
        <StatusText $w={85} $pad={12}>45 個のマーク</StatusText>
        <StatusText $w={955} $pad={0}>1 行 x 1 列</StatusText>
        <StatusCell $w={122} />
        <StatusCell $w={25} />
        <StatusCell $w={26} />
        <StatusCell $w={45} />
        <StatusTools $w={68}>
          <NavIcon d="M0 1h1.500v6H0zM7 1v6L2 4z" />
          <NavIcon d="M6 1v6L2 4z" />
          <NavIcon d="M2 1v6l4-3z" />
          <NavIcon d="M8 1H6.500v6H8zM1 1v6l5-3z" />
        </StatusTools>
        <StatusTools $w={74}>
          <svg width="11" height="11" viewBox="0 0 11 11" fill="#c8c8c8">
            <path d="M0 0h3v3H0zM4 0h3v3H4zM8 0h3v3H8zM0 4h3v3H0zM4 4h3v3H4zM8 4h3v3H8zM0 8h3v3H0zM4 8h3v3H4zM8 8h3v3H8z" />
          </svg>
          <svg width="11" height="11" viewBox="0 0 11 11" fill="#bcbcbc">
            <path d="M0 0h11v7H0zM0 8h3v3H0zM4 8h3v3H4zM8 8h3v3H8z" />
          </svg>
          <svg width="11" height="11" viewBox="0 0 11 11" fill="#666">
            <path d="M0 0h11v11H0z" />
          </svg>
        </StatusTools>
      </StatusBar>
    </Window>
  );
};

export default App;
